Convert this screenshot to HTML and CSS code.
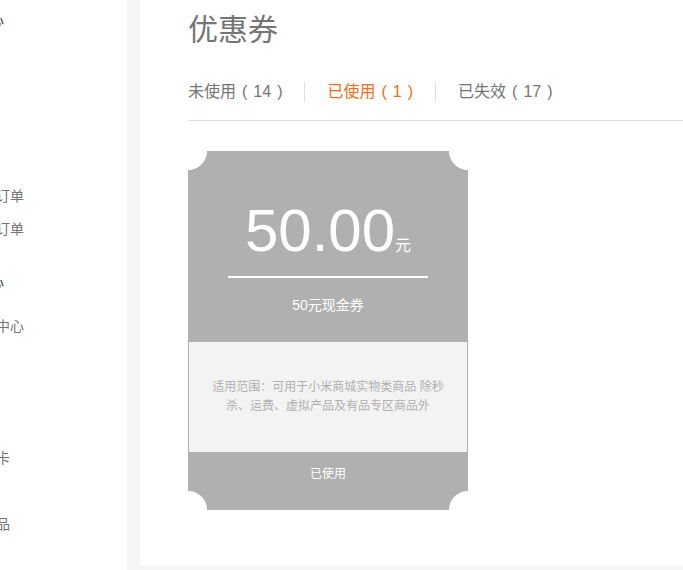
FILE: index.html
```html
<!DOCTYPE html>
<html lang="zh-CN">
<head>
<meta charset="utf-8">
<title>优惠券</title>
<link rel="stylesheet" href="styles.css">
</head>
<body>
<div class="page">
  <aside class="sidebar">
    <div class="nav">
      <div class="group">
        <h3 class="group-title">订单中心</h3>
        <ul class="items">
          <li>我的订单</li>
          <li>意外保</li>
          <li>团购订单</li>
          <li>评价晒单</li>
          <li>话费充值订单</li>
          <li>以旧换新订单</li>
        </ul>
      </div>
      <div class="group">
        <h3 class="group-title">个人中心</h3>
        <ul class="items">
          <li>我的个人中心</li>
          <li>消息通知</li>
          <li>购买资格</li>
          <li>现金账户</li>
          <li>小米礼品卡</li>
          <li>现金券</li>
          <li>喜欢的商品</li>
        </ul>
      </div>
    </div>
  </aside>
  <main class="main">
    <h1 class="title">优惠券</h1>
    <div class="tabs">
      <span class="tab">未使用<span class="p">(</span>14<span class="p end">)</span></span>
      <span class="sep"></span>
      <span class="tab active">已使用<span class="p">(</span>1<span class="p end">)</span></span>
      <span class="sep"></span>
      <span class="tab">已失效<span class="p">(</span>17<span class="p end">)</span></span>
    </div>
    <div class="coupon">
      <div class="coupon-top">
        <div class="amount"><span class="num">50.00</span><span class="unit">元</span></div>
        <div class="rule"></div>
        <div class="name">50元现金券</div>
      </div>
      <div class="coupon-mid">
        <p class="scope">适用范围：可用于小米商城实物类商品 除秒杀、运费、虚拟产品及有品专区商品外</p>
      </div>
      <div class="coupon-bottom">已使用</div>
    </div>
  </main>
</div>
</body>
</html>
```
FILE: styles.css
```css
* { box-sizing: border-box; }
html, body {
  margin: 0;
  padding: 0;
  height: 100%;
}
body {
  background: #f5f5f5;
  font-family: "Liberation Sans", "Noto Sans CJK SC", sans-serif;
  overflow: hidden;
}
.page {
  display: flex;
  gap: 13px;
  height: 570px;
}
.sidebar {
  width: 127px;
  flex: 0 0 127px;
  background: #fff;
  overflow: hidden;
  height: 570px;
}
.nav {
  margin-left: -60px;
  padding-top: 11px;
  width: 200px;
}
.group + .group {
  margin-top: 27px;
}
.group-title {
  margin: 0 0 17px;
  font-size: 16px;
  line-height: 20px;
  font-weight: 400;
  color: #424242;
  white-space: nowrap;
}
.items {
  list-style: none;
  margin: 0;
  padding: 0;
}
.items li {
  font-size: 14px;
  line-height: 33px;
  height: 33px;
  color: #757575;
  white-space: nowrap;
}
.main {
  flex: 1;
  background: #fff;
  height: 566px;
  padding: 10px 0 0 48px;
  overflow: hidden;
}
.title {
  margin: 0;
  font-size: 30px;
  line-height: 40px;
  font-weight: 400;
  color: #757575;
}
.tabs {
  margin-top: 32px;
  display: flex;
  align-items: center;
  gap: 22px;
  padding-bottom: 18px;
  border-bottom: 1px solid #e0e0e0;
  margin-right: -20px;
}
.tab {
  font-size: 16px;
  line-height: 20px;
  color: #757575;
  white-space: nowrap;
}
.tab .p {
  margin: 0 6px;
}
.tab .p.end {
  margin-right: 0;
}
.tab.active {
  color: #f06d1e;
}
.sep {
  width: 1px;
  height: 20px;
  background: #e0e0e0;
}
.coupon {
  margin-top: 30px;
  width: 280px;
}
.coupon-top {
  height: 191px;
  padding-top: 44px;
  text-align: center;
  color: #fff;
  background:
    radial-gradient(circle at 0 0, #fff 18.5px, rgba(255,255,255,0) 19.5px),
    radial-gradient(circle at 100% 0, #fff 18.5px, rgba(255,255,255,0) 19.5px),
    #b0b0b0;
}
.amount {
  line-height: 72px;
  height: 72px;
}
.num {
  font-size: 60px;
}
.unit {
  font-size: 16px;
}
.rule {
  width: 200px;
  height: 2px;
  background: #fff;
  margin: 9px auto 0;
}
.name {
  margin-top: 17px;
  font-size: 14px;
  line-height: 20px;
}
.coupon-mid {
  height: 110px;
  background: #f3f3f3;
  border-left: 1px solid #b0b0b0;
  border-right: 1px solid #b0b0b0;
  display: flex;
  align-items: center;
  justify-content: center;
  padding: 0 19px;
}
.scope {
  margin: 0;
  font-size: 12px;
  line-height: 19px;
  color: #b0b0b0;
  text-align: center;
}
.coupon-bottom {
  height: 58px;
  padding-top: 14px;
  font-size: 12px;
  line-height: 16px;
  color: #fff;
  text-align: center;
  background:
    radial-gradient(circle at 0 100%, #fff 18.5px, rgba(255,255,255,0) 19.5px),
    radial-gradient(circle at 100% 100%, #fff 18.5px, rgba(255,255,255,0) 19.5px),
    #b0b0b0;
}
```
